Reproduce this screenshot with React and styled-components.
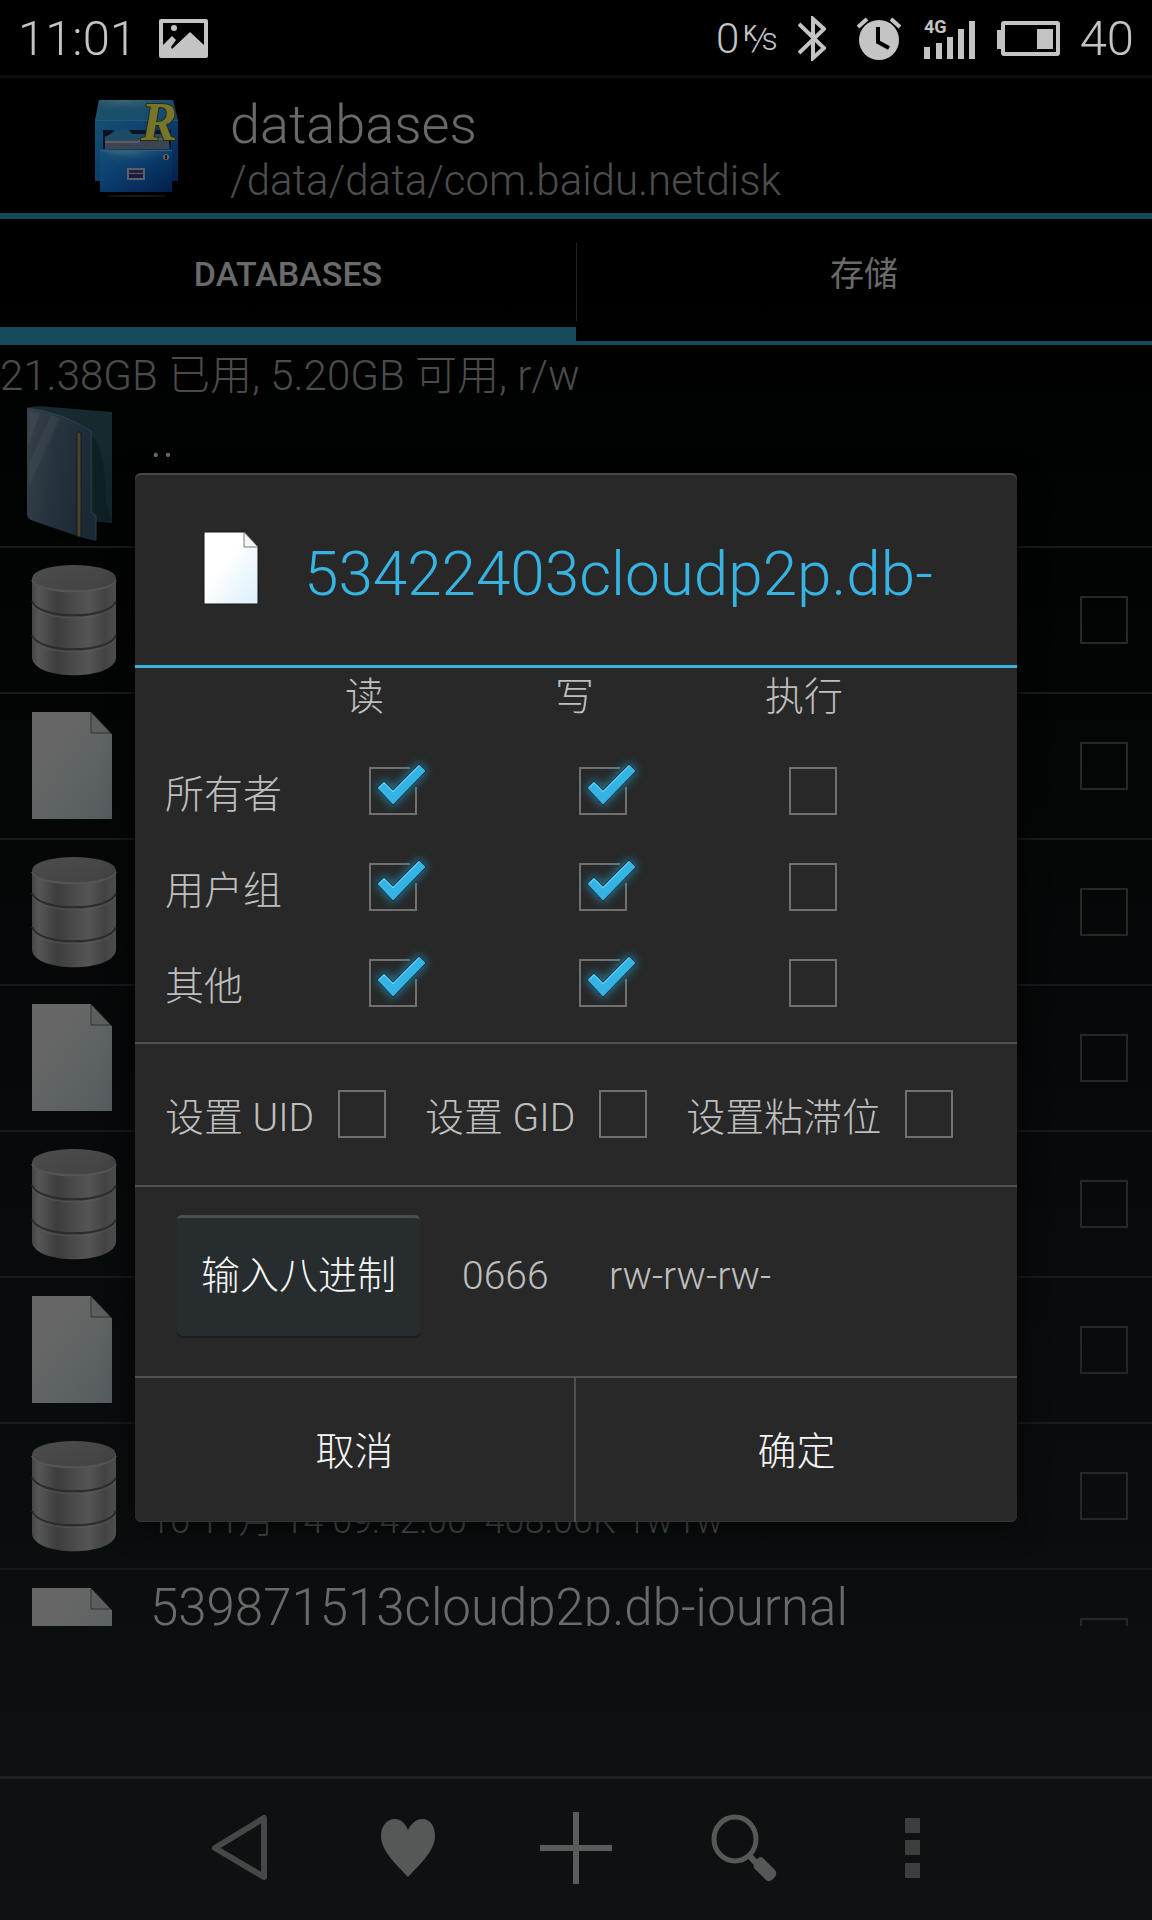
import React, { useState } from "react";
import styled, { createGlobalStyle } from "styled-components";

const GlobalStyle = createGlobalStyle`
  *, *::before, *::after { box-sizing: border-box; }
  body {
    margin: 0;
    background: #000;
    font-family: Roboto, "Noto Sans CJK SC", sans-serif;
    font-weight: 300;
  }
  button { font: inherit; border: 0; padding: 0; background: none; }
`;

const Screen = styled.div`
  display: flex;
  flex-direction: column;
  height: 100vh;
  min-height: 1200px;
  overflow: hidden;
  background: linear-gradient(#000 0%, #000 14%, #030505 35%, #0a0d0e 78%, #0f1213 100%);
`;

/* Status bar */

const StatusBar = styled.div`
  display: flex;
  flex: none;
  align-items: center;
  justify-content: space-between;
  height: 75px;
  padding: 2px 18px 0;
  color: #c4c4c4;
  font-size: 49px;
  line-height: 73px;
  background: #000;
`;

const StatusGroup = styled.div`
  display: flex;
  align-items: center;
  gap: ${(p) => p.$gap}px;
`;

const StatusIcon = styled.svg`
  display: block;
  flex: none;
`;

const Speed = styled.span`
  display: flex;
  align-items: center;
  font-size: 42px;
  gap: 4px;
`;

const SpeedUnit = styled.span`
  display: flex;
  align-items: center;
  height: 36px;
  font-size: 32px;
  line-height: 36px;

  sup {
    align-self: flex-start;
    font-size: 22px;
    line-height: 26px;
    font-weight: 400;
  }
  i {
    margin: 0 -4px;
  }
`;

/* File manager */

const Content = styled.div`
  position: relative;
  display: flex;
  flex: 1;
  flex-direction: column;
  min-height: 0;
`;

const Header = styled.header`
  display: flex;
  flex: none;
  align-items: center;
  gap: 50px;
  height: 144px;
  padding: 6px 0 0 95px;
  border-top: 3px solid #0d0d0d;
  border-bottom: 6px solid #17495b;
`;

const HeaderText = styled.div`
  display: flex;
  flex-direction: column;
  padding-top: 4px;
`;

const Title = styled.h1`
  margin: 0;
  color: #696969;
  font-size: 54px;
  font-weight: 300;
  line-height: 60px;
`;

const Path = styled.span`
  color: #4d4d4d;
  font-size: 42px;
  line-height: 52px;
`;

const Tabs = styled.nav`
  display: grid;
  flex: none;
  grid-template-columns: 1fr 1fr;
  height: 126px;
`;

const Tab = styled.button`
  position: relative;
  height: 126px;
  padding-bottom: ${(p) => (p.$active ? 16 : 22)}px;
  color: #6a6a6a;
  font-size: 34px;
  font-weight: ${(p) => (p.$active ? 500 : 400)};
  box-shadow: inset 0 ${(p) => (p.$active ? -18 : -4)}px 0 #15495c;

  &:last-child::before {
    content: "";
    position: absolute;
    top: 24px;
    left: 0;
    width: 1px;
    height: 78px;
    background: #222;
  }
`;

const Storage = styled.p`
  flex: none;
  margin: 0;
  height: 57px;
  color: #4b4b4b;
  font-size: 42px;
  line-height: 62px;
  white-space: nowrap;
`;

const FileList = styled.ul`
  flex: 1;
  min-height: 0;
  margin: 0 0 150px;
  padding: 0;
  overflow: hidden;
  list-style: none;
`;

const FileRow = styled.li`
  display: flex;
  height: 146px;
  padding-right: 24px;
  border-bottom: 2px solid #171a1b;
`;

const FileIconCell = styled.div`
  flex: none;
  width: 150px;
`;

const FileText = styled.div`
  display: flex;
  flex: 1;
  flex-direction: column;
  padding-top: 8px;
  white-space: pre;
`;

const FileName = styled.span`
  height: 56px;
  color: #6a6a6a;
  font-size: 51px;
  line-height: 60px;
`;

const FileMeta = styled.span`
  color: #505253;
  font-size: 36px;
  line-height: 66px;
`;

const Box = styled.input`
  display: block;
  flex: none;
  align-self: center;
  appearance: none;
  width: 48px;
  height: 48px;
  margin: 0;
  border: 2px solid ${(p) => (p.$dim ? "#262828" : "#707070")};
  border-radius: 0;

  &:checked { border-color: transparent; }
`;

const Toolbar = styled.footer`
  display: flex;
  flex: none;
  justify-content: center;
  height: 144px;
  padding-bottom: 3px;
  border-top: 3px solid #1f2324;
`;

const ToolButton = styled.button`
  display: flex;
  align-items: center;
  justify-content: center;
  width: 168px;
`;

/* Dialog */

const Overlay = styled.div`
  position: absolute;
  inset: 0;
  display: flex;
  align-items: center;
  padding: 0 135px;
`;

const Dialog = styled.section`
  flex: 1;
  min-width: 0;
  color: #bebebe;
  font-size: 39px;
  background: #282828;
  border-radius: 6px;
  box-shadow: 0 6px 28px rgba(0, 0, 0, 0.7), inset 0 2px 0 #474747, inset 0 -1px 0 #353535;
`;

const DialogHeader = styled.header`
  display: flex;
  align-items: center;
  gap: 43px;
  height: 195px;
  padding-left: 68px;
  border-bottom: 3px solid #3cb0dc;
`;

const DialogTitle = styled.h2`
  margin: 0;
  padding-top: 8px;
  color: #38b4e3;
  font-size: 62px;
  font-weight: 300;
  white-space: nowrap;
`;

const PermissionTable = styled.table`
  width: 100%;
  table-layout: fixed;
  border-collapse: collapse;

  th {
    padding: 0;
    font-weight: 300;
    text-align: left;
  }
  thead th {
    height: 75px;
    padding-bottom: 17px;
    line-height: 56px;
  }
  tbody th { padding: 0 0 0 30px; }
  td { height: 96px; padding: 0 0 0 24px; }
`;

const LabelColumn = styled.col`
  width: 210px;
`;

const TableFrame = styled.div`
  padding-bottom: 11px;
`;

const Check = styled.span`
  position: relative;
  display: block;
  width: 48px;
  height: 48px;
`;

const CheckMark = styled.svg`
  position: absolute;
  top: -16px;
  left: -16px;
  pointer-events: none;
`;

const FlagRow = styled.div`
  display: flex;
  align-items: center;
  gap: 39px;
  height: 143px;
  padding: 0 30px 2px;
  border-top: 2px solid #505050;
`;

const FlagLabel = styled.label`
  display: flex;
  align-items: center;
  gap: 24px;
  white-space: nowrap;
`;

const OctalRow = styled.div`
  display: flex;
  align-items: center;
  height: 191px;
  padding: 0 42px 12px;
  border-top: 2px solid #505050;
`;

const OctalButton = styled.button`
  width: 243px;
  height: 121px;
  margin-right: 42px;
  padding-bottom: 10px;
  color: #f6f6f6;
  background: #272c2f;
  border-top: 3px solid #4a4f52;
  border-radius: 5px;
  box-shadow: 0 2px 0 #1b1d1e;
`;

const OctalValue = styled.output`
  width: 147px;
`;

const Actions = styled.footer`
  display: grid;
  grid-template-columns: 1fr 1fr;
  height: 146px;
  border-top: 2px solid #505050;
`;

const ActionButton = styled.button`
  padding-bottom: 4px;
  color: #f6f6f6;
  &:first-child { border-right: 2px solid #505050; }
`;

function AppLogo() {
  return (
    <svg width="85" height="99" viewBox="0 0 85 99" aria-hidden="true">
      <defs>
        <linearGradient id="top" x1="0" y1="0" x2="1" y2="1">
          <stop offset="0" stopColor="#1c5262" />
          <stop offset=".5" stopColor="#174b70" />
          <stop offset="1" stopColor="#082557" />
        </linearGradient>
        <linearGradient id="front" x1="0" y1="0" x2="1" y2="1">
          <stop offset="0" stopColor="#125078" />
          <stop offset=".5" stopColor="#093a69" />
          <stop offset="1" stopColor="#051e4d" />
        </linearGradient>
        <radialGradient id="shine" cx=".35" cy="0" r=".8">
          <stop offset="0" stopColor="#50717a" />
          <stop offset="1" stopColor="#0c406e" stopOpacity="0" />
        </radialGradient>
      </defs>
      <ellipse cx="42" cy="97" rx="30" ry="1" fill="#14171d" />
      <path d="M4 1H78L83 21V82H0V21Z" fill="url(#top)" />
      <path d="M4 1H78L83 21H0Z" fill="url(#shine)" opacity=".7" />
      <path d="M0 21H83V82H0Z" fill="url(#front)" opacity=".8" />
      <path d="M0 21.500H83" stroke="#235977" />
      <path d="M8 31H76V50H8Z" fill="#0a1324" />
      <path d="M10 50V38L17 34L20 31H34L37 35H72L75 50Z" fill="#1d4b66" />
      <path d="M10 50V41H43L47 38H74V50Z" fill="#3c4452" />
      <path d="M10 43H43L47 40H74" stroke="#747783" fill="none" />
      <path d="M5 51H77V93H5Z" fill="url(#front)" />
      <path d="M5 51H77L74 66L5 52Z" fill="url(#shine)" opacity=".6" />
      <path d="M5 51H77L38 73Z" fill="url(#shine)" opacity=".5" />
      <path d="M5 51.500H77" stroke="#2b607d" />
      <rect x="32" y="69" width="18" height="12" fill="#5c5f68" />
      <path d="M34 71H48V74H34Z" fill="#22223e" />
      <path d="M34 75H48V79H34Z" fill="#191b40" />
      <circle cx="71" cy="58" r="3" fill="#66675d" />
      <path d="M71 56V60" stroke="#14171d" strokeWidth="2" />
      <text
        x="46" y="41" fill="#77752a" stroke="#262b16" strokeWidth="2" paintOrder="stroke"
        fontFamily="Liberation Serif, serif" fontSize="54" fontWeight="700" fontStyle="italic"
      >R</text>
    </svg>
  );
}

function FolderIcon() {
  return (
    <svg width="144" height="146" viewBox="0 0 144 146" aria-hidden="true">
      <defs>
        <linearGradient id="folderFront" x1="0" y1="0" x2="1" y2=".3">
          <stop offset="0" stopColor="#3a4149" />
          <stop offset=".45" stopColor="#27343f" />
          <stop offset="1" stopColor="#1b2935" />
        </linearGradient>
        <linearGradient id="folderBack" x1="0" y1="0" x2="0" y2="1">
          <stop offset="0" stopColor="#172a30" />
          <stop offset="1" stopColor="#13252b" />
        </linearGradient>
      </defs>
      <path d="M27 6Q35 3 50 5L112 10V121L92 119Z" fill="url(#folderBack)" />
      <path d="M92 34Q105 44 106 100L112 121L95 119Z" fill="#0e2026" />
      <path d="M27 6Q62 10 91 29V110L96 114V139L80 135L31 118Q27 116 27 112Z" fill="url(#folderFront)" />
      <path d="M27 6Q62 10 91 29V110L96 114V138" fill="none" stroke="#2f3f48" />
      <path d="M29 10L40 11L28 45ZM29 62L51 13L60 16L29 84Z" fill="#59616a" opacity=".2" />
      <rect x="77" y="30" width="4" height="105" rx="2" fill="#4b4431" stroke="#151a1c" />
    </svg>
  );
}

function DatabaseIcon() {
  return (
    <svg width="144" height="144" viewBox="0 0 144 144" aria-hidden="true">
      <defs>
        <linearGradient id="dbBody">
          <stop offset="0" stopColor="#464646" />
          <stop offset=".08" stopColor="#565656" />
          <stop offset=".3" stopColor="#3d3d3d" />
          <stop offset=".68" stopColor="#555" />
          <stop offset=".86" stopColor="#434343" />
          <stop offset="1" stopColor="#515151" />
        </linearGradient>
        <linearGradient id="dbTop" x1="0" y1="0" x2="1" y2="1">
          <stop offset="0" stopColor="#4c4c4c" />
          <stop offset="1" stopColor="#424242" />
        </linearGradient>
      </defs>
      <path d="M32 30V110C34 133 114 133 116 110V30Z" fill="url(#dbBody)" />
      <ellipse cx="74" cy="30" rx="42" ry="13" fill="url(#dbTop)" />
      <path d="M32 32C38 47 110 47 116 32" fill="none" stroke="#555" strokeWidth="2" />
      <path d="M32 53C38 72 110 72 116 53M32 87C38 106 110 106 116 87" fill="none" stroke="#2c2c2c" strokeWidth="2" />
      <path d="M33 57C40 74 108 74 115 57M33 91C40 108 108 108 115 91" fill="none" stroke="#5c5c5c" opacity=".6" />
    </svg>
  );
}

function PageIcon() {
  return (
    <svg width="144" height="144" viewBox="0 0 144 144" aria-hidden="true">
      <defs>
        <linearGradient id="pageDim" x1="0" y1="0" x2="1" y2="1">
          <stop offset=".3" stopColor="#666" />
          <stop offset=".6" stopColor="#5e6363" />
          <stop offset="1" stopColor="#545c60" />
        </linearGradient>
      </defs>
      <path d="M32 18H91L112 40V125H32Z" fill="url(#pageDim)" />
      <path d="M91 18V40H112Z" fill="#5c5e5e" />
      <path d="M91 19V39H111" fill="none" stroke="#333" strokeWidth="1" />
      <path d="M91 18L112 40" stroke="#181a1a" strokeWidth="1" />
    </svg>
  );
}

function DialogPageIcon() {
  return (
    <svg width="58" height="76" viewBox="0 0 58 76" aria-hidden="true">
      <defs>
        <linearGradient id="page" x1="0" y1="0" x2="1" y2="1">
          <stop offset=".4" stopColor="#fff" />
          <stop offset=".6" stopColor="#f1faff" />
          <stop offset="1" stopColor="#dceefd" />
        </linearGradient>
      </defs>
      <path d="M1 1H41L55 15V73H1Z" fill="url(#page)" stroke="#151515" />
      <path d="M41 1V16H55Z" fill="#f5f5f5" stroke="#777" />
    </svg>
  );
}

function PermissionCheck({ label, initial }) {
  const [checked, setChecked] = useState(initial);
  return (
    <Check>
      <Box type="checkbox" aria-label={label} checked={checked} onChange={(e) => setChecked(e.target.checked)} />
      {checked && (
        <CheckMark width="88" height="80" viewBox="-16 -16 88 80" aria-hidden="true">
          <defs>
            <filter id="glow" x="-50%" y="-50%" width="200%" height="200%">
              <feGaussianBlur stdDeviation="5" />
            </filter>
          </defs>
          <path d="M41 1H1V47H47V20" fill="none" stroke="#707070" strokeWidth="2" />
          <path d="M9 21L16 15L24 24L50 -2L56 4L24 37Z" fill="#2090b8" stroke="#2090b8" strokeWidth="4" filter="url(#glow)" opacity=".8" />
          <path d="M8 21L15 14L24 23L50 -3L57 4L24 38Z" fill="#34b4e4" stroke="#122b35" />
          <path d="M10 21L15 16L24 25L50 -1" fill="none" stroke="#6cd0f2" />
        </CheckMark>
      )}
    </Check>
  );
}

const files = [
  { Icon: FolderIcon, name: "..", parent: true },
  { Icon: DatabaseIcon },
  { Icon: PageIcon },
  { Icon: DatabaseIcon },
  { Icon: PageIcon },
  { Icon: DatabaseIcon },
  { Icon: PageIcon },
  { Icon: DatabaseIcon, meta: "16 11月 14 09:42:00  408.00K  rw-rw----" },
  { Icon: PageIcon, name: "539871513cloudp2p.db-journal" },
];

const modes = ["读", "写", "执行"];
const owners = ["所有者", "用户组", "其他"];
const flags = ["设置 UID", "设置 GID", "设置粘滞位"];

export default function App() {
  return (
    <Screen>
      <GlobalStyle />
      <StatusBar>
        <StatusGroup $gap={22}>
          <span>11:01</span>
          <StatusIcon width="49" height="39" viewBox="0 0 49 39" fill="#c4c4c4">
            <path fillRule="evenodd" d="M2 0H47Q49 0 49 2V37Q49 39 47 39H2Q0 39 0 37V2Q0 0 2 0ZM4 4V26L13 17L17 21L12 28L13 30L31 13L45 26V4Z" />
            <circle cx="15" cy="9" r="3" />
          </StatusIcon>
        </StatusGroup>
        <StatusGroup $gap={20}>
          <Speed>
            0
            <SpeedUnit><sup>K</sup><i>/</i>s</SpeedUnit>
          </Speed>
          <StatusIcon width="28" height="45" viewBox="0 0 28 45" fill="none" stroke="#c4c4c4" strokeWidth="4">
            <path d="M1 8L26 32L15 42V3L26 13L1 37" />
          </StatusIcon>
          <StatusIcon width="58" height="44" viewBox="-11 0 58 44">
            <circle cx="22" cy="23" r="20" fill="#c4c4c4" />
            <path d="M1 10L10 2M43 10L34 2" stroke="#c4c4c4" strokeWidth="4" />
            <path d="M21 10V25L32 31" fill="none" stroke="#000" strokeWidth="4" />
          </StatusIcon>
          <StatusIcon width="53" height="41" viewBox="0 0 53 41" fill="#c4c4c4">
            <path d="M0 29H6V41H0ZM12 25H18V41H12ZM23 19H29V41H23ZM34 11H40V41H34ZM45 3H51V41H45Z" />
            <text x="0" y="15" fontFamily="Roboto, sans-serif" fontSize="18" fontWeight="700">4G</text>
          </StatusIcon>
          <StatusIcon width="63" height="36" viewBox="0 0 63 36">
            <path d="M0 9H5V28H0Z" fill="#c4c4c4" />
            <rect x="6" y="2" width="55" height="31" rx="1" fill="none" stroke="#c4c4c4" strokeWidth="4" />
            <path d="M40 8H56V28H40Z" fill="#c4c4c4" />
          </StatusIcon>
          <span>40</span>
        </StatusGroup>
      </StatusBar>

      <Content>
        <Header>
          <AppLogo />
          <HeaderText>
            <Title>databases</Title>
            <Path>/data/data/com.baidu.netdisk</Path>
          </HeaderText>
        </Header>
        <Tabs>
          <Tab type="button" $active>DATABASES</Tab>
          <Tab type="button">存储</Tab>
        </Tabs>
        <Storage>21.38GB 已用, 5.20GB 可用, r/w</Storage>
        <FileList>
          {files.map(({ Icon, name, meta, parent }, i) => (
            <FileRow key={i}>
              <FileIconCell><Icon /></FileIconCell>
              <FileText>
                <FileName>{name}</FileName>
                {meta && <FileMeta>{meta}</FileMeta>}
              </FileText>
              {!parent && <Box type="checkbox" $dim aria-label={name || "选择"} />}
            </FileRow>
          ))}
        </FileList>
        <Toolbar>
          <ToolButton type="button" aria-label="返回">
            <svg width="58" height="68" viewBox="0 0 58 68">
              <path d="M53 4V63L4 34Z" fill="none" stroke="#464848" strokeWidth="6" strokeLinejoin="round" />
            </svg>
          </ToolButton>
          <ToolButton type="button" aria-label="收藏">
            <svg width="54" height="58" viewBox="0 0 54 58">
              <path d="M27 11C31 4 35 0 41 0C50 0 54 8 54 17C54 32 38 46 27 58C16 46 0 32 0 17C0 8 5 0 14 0C20 0 24 4 27 11Z" fill="#565858" />
            </svg>
          </ToolButton>
          <ToolButton type="button" aria-label="新建">
            <svg width="72" height="72" viewBox="0 0 72 72">
              <path d="M36 0V72M0 36H72" stroke="#5a5c5c" strokeWidth="6" />
            </svg>
          </ToolButton>
          <ToolButton type="button" aria-label="搜索">
            <svg width="66" height="68" viewBox="0 0 66 68">
              <ellipse cx="24" cy="25" rx="21" ry="22" fill="none" stroke="#565858" strokeWidth="5" />
              <path d="M38 41L44 48" stroke="#565858" strokeWidth="6" />
              <path d="M42 48L49 43Q52 43 54 46L64 56Q67 60 63 64Q59 69 55 66L43 54Z" fill="#565858" />
            </svg>
          </ToolButton>
          <ToolButton type="button" aria-label="更多">
            <svg width="15" height="60" viewBox="0 0 15 60">
              <path d="M0 0H15V15H0ZM0 22H15V37H0ZM0 45H15V60H0Z" fill="#3d3f3f" />
            </svg>
          </ToolButton>
        </Toolbar>

        <Overlay>
          <Dialog role="dialog" aria-labelledby="dialog-title">
            <DialogHeader>
              <DialogPageIcon />
              <DialogTitle id="dialog-title">53422403cloudp2p.db-</DialogTitle>
            </DialogHeader>
            <TableFrame>
              <PermissionTable>
                <colgroup>
                  <LabelColumn />
                  <LabelColumn />
                  <LabelColumn />
                  <col />
                </colgroup>
                <thead>
                  <tr>
                    <th aria-label="权限" />
                    {modes.map((m) => <th key={m} scope="col">{m}</th>)}
                  </tr>
                </thead>
                <tbody>
                  {owners.map((o) => (
                    <tr key={o}>
                      <th scope="row">{o}</th>
                      {modes.map((m, i) => (
                        <td key={m}><PermissionCheck label={`${o} ${m}`} initial={i < 2} /></td>
                      ))}
                    </tr>
                  ))}
                </tbody>
              </PermissionTable>
            </TableFrame>
            <FlagRow>
              {flags.map((f) => (
                <FlagLabel key={f}><span>{f}</span><Box type="checkbox" /></FlagLabel>
              ))}
            </FlagRow>
            <OctalRow>
              <OctalButton type="button">输入八进制</OctalButton>
              <OctalValue>0666</OctalValue>
              <output>rw-rw-rw-</output>
            </OctalRow>
            <Actions>
              <ActionButton type="button">取消</ActionButton>
              <ActionButton type="button">确定</ActionButton>
            </Actions>
          </Dialog>
        </Overlay>
      </Content>
    </Screen>
  );
}
